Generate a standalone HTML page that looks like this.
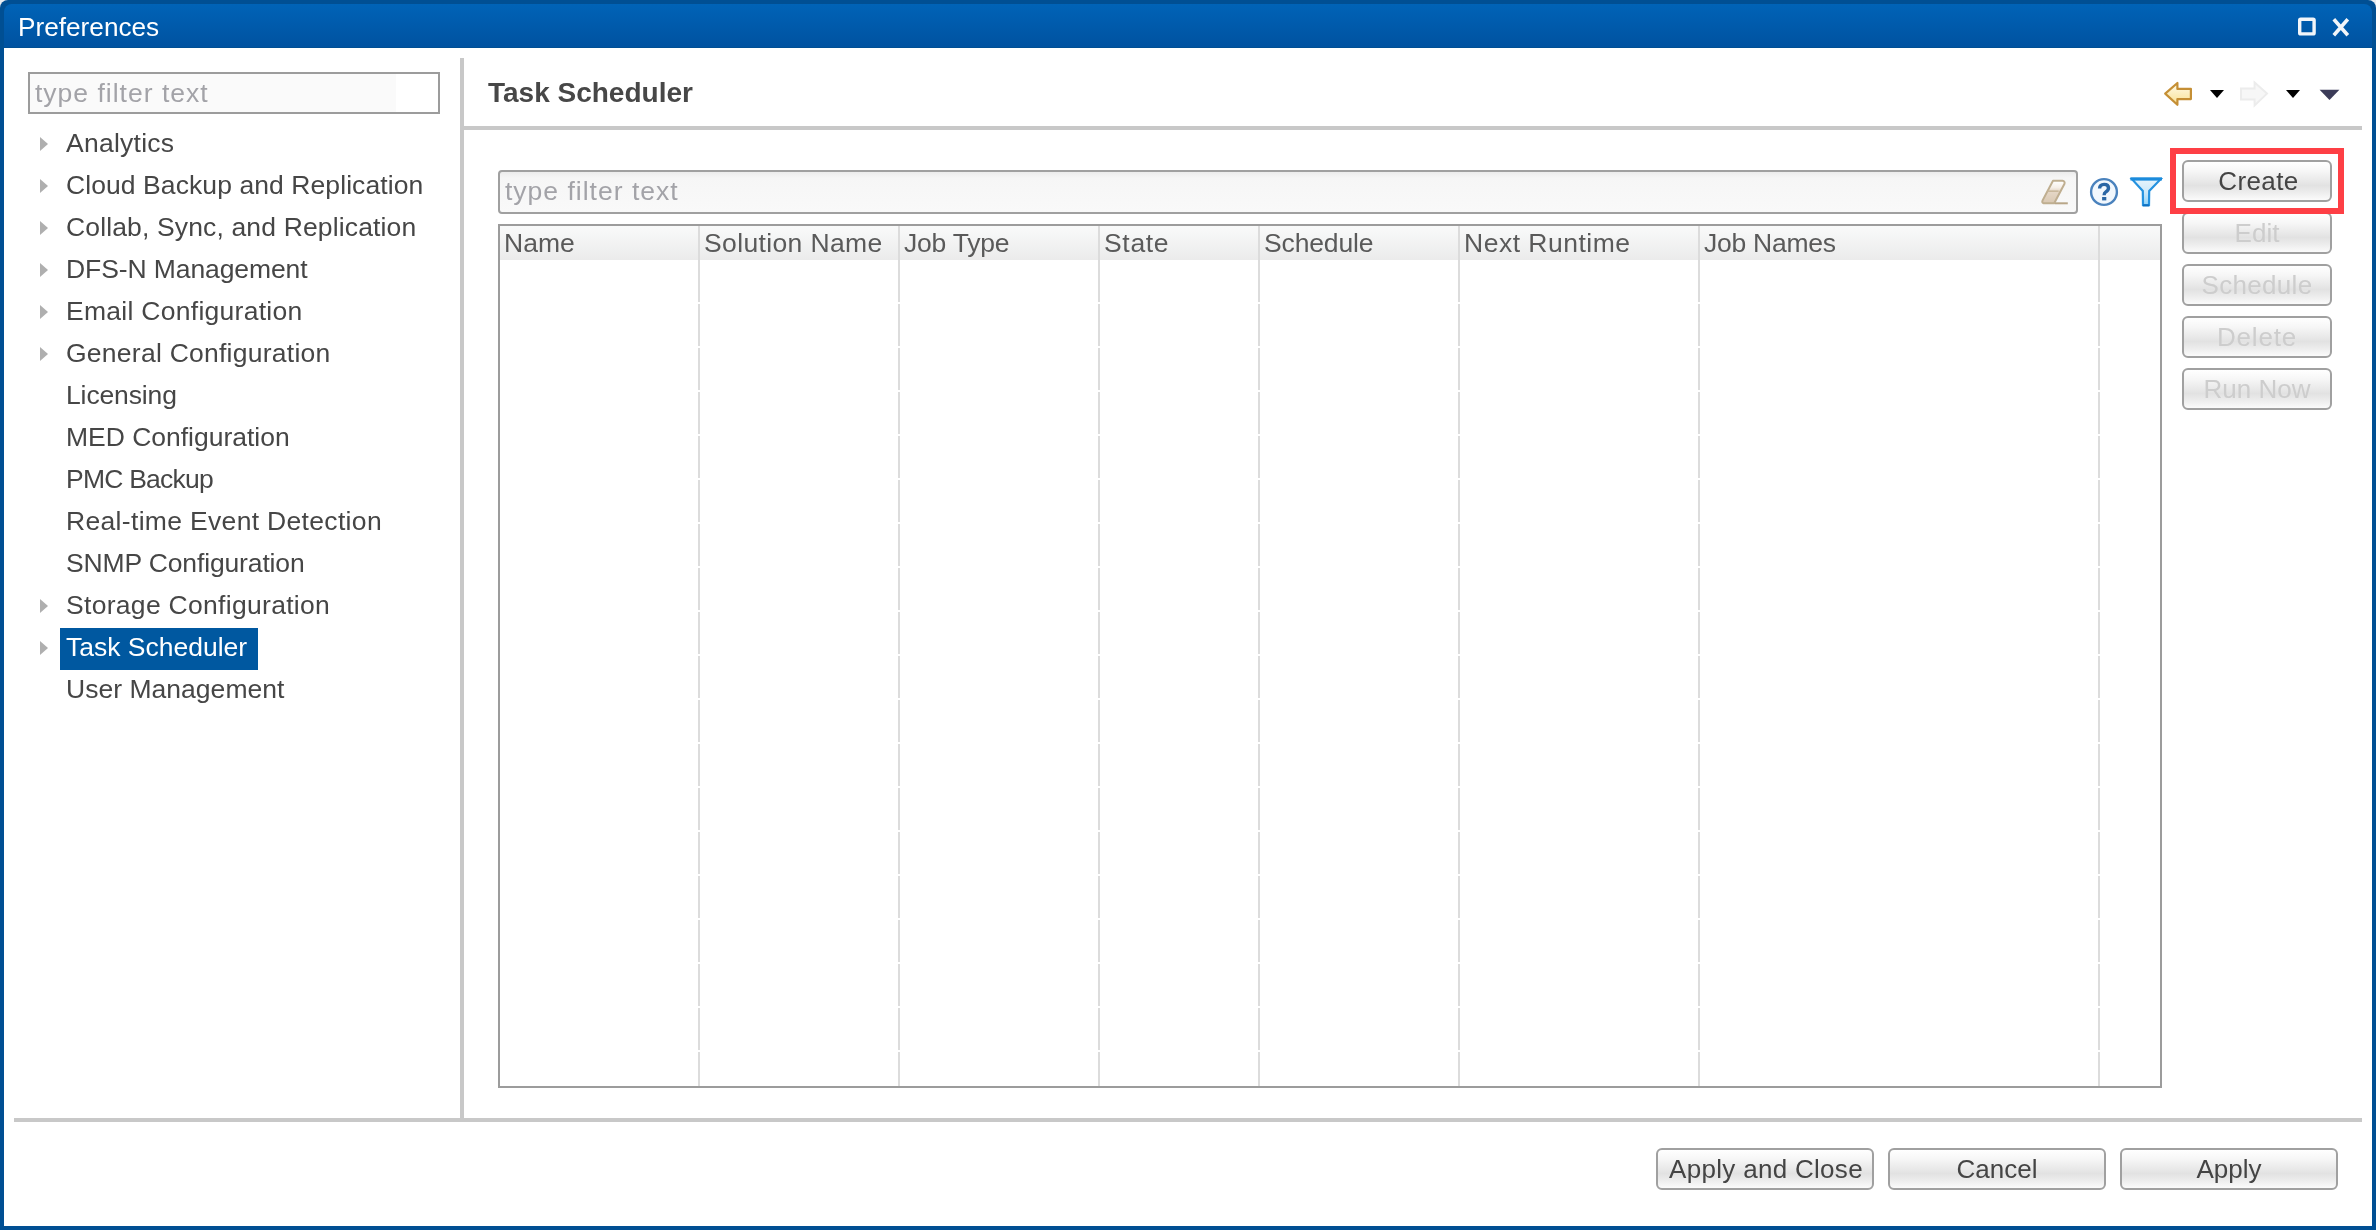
<!DOCTYPE html>
<html><head><meta charset="utf-8">
<style>
html,body{margin:0;padding:0;}
.t,.th,.btn span{will-change:transform;}
body{width:2376px;height:1230px;position:relative;overflow:hidden;background:#e9edf1;font-family:"Liberation Sans",sans-serif;}
.a{position:absolute;}
.t{position:absolute;white-space:nowrap;font-size:26.5px;line-height:30px;color:#464646;}
#frame{left:0;top:0;width:2376px;height:1230px;background:#004f93;border-radius:8px 8px 0 0;}
#titlebar{left:4px;top:4px;width:2368px;height:43px;background:linear-gradient(#0063b7,#0052a0);border-radius:8px 8px 0 0;}
#client{left:4px;top:48px;width:2368px;height:1178px;background:#ffffff;}
.tri{position:absolute;left:40px;width:0;height:0;border-top:7.5px solid transparent;border-bottom:7.5px solid transparent;border-left:8.5px solid #afafaf;}
.btn{position:absolute;box-sizing:border-box;border:2px solid #a0a0a0;border-radius:6px;background:linear-gradient(#ffffff 0%,#f6f6f6 25%,#e2e2e2 62%,#eeeeee 82%,#fbfbfb 100%);}
.btn span{position:absolute;left:0;right:0;top:4px;text-align:center;white-space:nowrap;font-size:26px;line-height:30px;color:#444;}
.btn.dis span{color:#cdcdcd;}
.colsep{position:absolute;width:2px;top:226px;height:860px;background:linear-gradient(#dcdcdc,#dcdcdc) 0 0/2px 76px no-repeat,repeating-linear-gradient(#dcdcdc 0px,#dcdcdc 42px,#ffffff 42px,#ffffff 44px) 0 78px/2px 782px no-repeat;}
.th{position:absolute;top:228px;white-space:nowrap;font-size:26.5px;line-height:30px;color:#5a5a5a;}
</style></head>
<body>
<div id="frame" class="a"></div>
<div id="titlebar" class="a"></div>
<div class="t" style="left:18px;top:12px;font-size:26.2px;color:#ffffff;">Preferences</div>
<!-- max / close -->
<svg class="a" style="left:2290px;top:10px" width="70" height="34" viewBox="0 0 70 34">
  <rect x="9.7" y="9.3" width="14.4" height="14.6" rx="1" fill="none" stroke="#f2f5f9" stroke-width="3.4"/>
  <path d="M43.8 9.3 L57.8 25.3 M57.8 9.3 L43.8 25.3" stroke="#f2f5f9" stroke-width="3.6" stroke-linecap="butt"/>
</svg>
<div id="client" class="a"></div>

<!-- left filter -->
<div class="a" style="left:28px;top:72px;width:408px;height:38px;border:2px solid #9c9c9c;background:linear-gradient(90deg,#fafafa 0,#fafafa 366px,#ffffff 366px);"></div>
<div class="t" style="left:35px;top:78px;font-size:26.5px;color:#a3a3a8;letter-spacing:1px;">type filter text</div>

<!-- tree -->
<div class="a" style="left:60px;top:628px;width:198px;height:42px;background:#0058a0;"></div>
<div class="tri" style="top:137px"></div>
<div class="tri" style="top:179px"></div>
<div class="tri" style="top:221px"></div>
<div class="tri" style="top:263px"></div>
<div class="tri" style="top:305px"></div>
<div class="tri" style="top:347px"></div>
<div class="tri" style="top:599px"></div>
<div class="tri" style="top:641px"></div>
<div class="t" style="left:66px;top:128px;letter-spacing:0.250px">Analytics</div>
<div class="t" style="left:66px;top:170px;letter-spacing:0.081px">Cloud Backup and Replication</div>
<div class="t" style="left:66px;top:212px;letter-spacing:0.143px">Collab, Sync, and Replication</div>
<div class="t" style="left:66px;top:254px;letter-spacing:-0.093px">DFS-N Management</div>
<div class="t" style="left:66px;top:296px;letter-spacing:0.278px">Email Configuration</div>
<div class="t" style="left:66px;top:338px;letter-spacing:0.250px">General Configuration</div>
<div class="t" style="left:66px;top:380px;letter-spacing:-0.125px">Licensing</div>
<div class="t" style="left:66px;top:422px;letter-spacing:-0.013px">MED Configuration</div>
<div class="t" style="left:66px;top:464px;letter-spacing:-0.778px">PMC Backup</div>
<div class="t" style="left:66px;top:506px;letter-spacing:0.325px">Real-time Event Detection</div>
<div class="t" style="left:66px;top:548px;letter-spacing:-0.141px">SNMP Configuration</div>
<div class="t" style="left:66px;top:590px;letter-spacing:0.300px">Storage Configuration</div>
<div class="t" style="left:66px;top:632px;color:#ffffff;letter-spacing:0px">Task Scheduler</div>
<div class="t" style="left:66px;top:674px;letter-spacing:0.028px">User Management</div>

<!-- dividers -->
<div class="a" style="left:460px;top:58px;width:4px;height:1064px;background:#c8c8c8;"></div>
<div class="a" style="left:14px;top:1118px;width:2348px;height:4px;background:#c8c8c8;"></div>
<div class="a" style="left:464px;top:126px;width:1898px;height:4px;background:#c8c8c8;"></div>

<!-- header -->
<div class="t" style="left:488px;top:78px;font-size:28px;font-weight:bold;color:#474747;">Task Scheduler</div>

<!-- toolbar icons -->
<svg class="a" style="left:2160px;top:78px" width="190" height="32" viewBox="0 0 190 32">
  <defs>
    <linearGradient id="gback" x1="0" y1="0" x2="0" y2="1"><stop offset="0" stop-color="#fffbea"/><stop offset="1" stop-color="#f9e092"/></linearGradient>
  </defs>
  <path d="M5.2 15.6 L17.4 5 L17.4 10.9 L30.9 10.9 L30.9 21.1 L17.4 21.1 L17.4 26.8 Z" fill="url(#gback)" stroke="#c58f35" stroke-width="2.2" stroke-linejoin="round"/>
  <path d="M50 12 L64 12 L57 20 Z" fill="#000"/>
  <path d="M107 15.6 L94.6 4.5 L94.6 10.5 L81 10.5 L81 21.5 L94.6 21.5 L94.6 27.5 Z" fill="#f7f7f7" stroke="#ececec" stroke-width="2"/>
  <path d="M126 12 L140 12 L133 20 Z" fill="#000"/>
  <path d="M159.6 11.8 L179.4 11.8 L169.5 22 Z" fill="#3b3b58"/>
</svg>

<!-- filter box -->
<div class="a" style="left:498px;top:170px;width:1576px;height:40px;border:2px solid #a0a0a0;border-radius:4px;background:linear-gradient(#ececec 0,#f6f6f6 6px,#f9f9f9 100%);"></div>
<div class="t" style="left:505px;top:176px;color:#a3a3a8;letter-spacing:1px;">type filter text</div>
<!-- eraser -->
<svg class="a" style="left:2038px;top:176px" width="34" height="32" viewBox="0 0 34 32">
  <defs><linearGradient id="ger" x1="0" y1="0" x2="0" y2="1"><stop offset="0" stop-color="#ffffff"/><stop offset="0.3" stop-color="#f6efe8"/><stop offset="0.45" stop-color="#e6d8c8"/><stop offset="1" stop-color="#d9c8b2"/></linearGradient></defs>
  <path d="M15 4.8 L24.5 4.8 Q27.2 5.2 26.5 7.8 L16.2 27.2 L5.5 27.2 Q3.6 26.8 4.6 24.4 Z" fill="url(#ger)" stroke="#bfae90" stroke-width="2" stroke-linejoin="round"/>
  <path d="M9.6 15.2 L20.6 15.2" stroke="#c9b89c" stroke-width="1.6"/>
  <path d="M17 27.3 L29.8 27.3" stroke="#b8a688" stroke-width="2"/>
</svg>
<!-- help -->
<svg class="a" style="left:2088px;top:176px" width="32" height="32" viewBox="0 0 32 32">
  <circle cx="16" cy="16" r="12.9" fill="#f1f7fd" stroke="#4a82bd" stroke-width="2.4"/>
  <path d="M11.6 12.6 Q11.6 8.4 16.1 8.4 Q20.5 8.4 20.5 12 Q20.5 14.4 17.8 15.9 Q16.1 16.9 16.1 19.2" fill="none" stroke="#2a66a5" stroke-width="3.4"/>
  <rect x="14.1" y="21" width="4.2" height="3.4" fill="#2a66a5"/>
</svg>
<!-- funnel -->
<svg class="a" style="left:2128px;top:175px" width="38" height="34" viewBox="0 0 38 34">
  <defs><linearGradient id="gfun" x1="0" y1="0" x2="0" y2="1"><stop offset="0" stop-color="#e6f4fc"/><stop offset="0.5" stop-color="#cde9fa"/><stop offset="1" stop-color="#90d2f7"/></linearGradient></defs>
  <path d="M4 4.2 L32.6 4.2 L21.2 16 L21 30.2 L15 30.2 L14.8 16 Z" fill="url(#gfun)" stroke="#2592df" stroke-width="2.2" stroke-linejoin="miter"/>
  <path d="M2.4 3.9 L34 3.9" stroke="#1b8bdc" stroke-width="3.2"/>
  <path d="M15 30.4 L21 30.4" stroke="#0f6fc0" stroke-width="2"/>
</svg>

<!-- table -->
<div class="a" style="left:498px;top:224px;width:1660px;height:860px;border:2px solid #9c9c9c;background:#ffffff;"></div>
<div class="a" style="left:500px;top:226px;width:1660px;height:34px;background:linear-gradient(#f9fafa,#ebebeb);"></div>
<div class="colsep" style="left:698px"></div>
<div class="colsep" style="left:898px"></div>
<div class="colsep" style="left:1098px"></div>
<div class="colsep" style="left:1258px"></div>
<div class="colsep" style="left:1458px"></div>
<div class="colsep" style="left:1698px"></div>
<div class="colsep" style="left:2098px"></div>
<div class="th" style="left:504px">Name</div>
<div class="th" style="left:704px;letter-spacing:0.37px">Solution Name</div>
<div class="th" style="left:904px;letter-spacing:-0.23px">Job Type</div>
<div class="th" style="left:1104px;letter-spacing:0.67px">State</div>
<div class="th" style="left:1264px;letter-spacing:-0.14px">Schedule</div>
<div class="th" style="left:1464px;letter-spacing:0.50px">Next Runtime</div>
<div class="th" style="left:1704px;letter-spacing:-0.26px">Job Names</div>

<!-- side buttons -->
<div class="btn" style="left:2182px;top:160px;width:150px;height:42px;"><span style="letter-spacing:0.4px;padding-left:3px">Create</span></div>
<div class="btn dis" style="left:2182px;top:212px;width:150px;height:42px;"><span>Edit</span></div>
<div class="btn dis" style="left:2182px;top:264px;width:150px;height:42px;"><span style="letter-spacing:0.3px">Schedule</span></div>
<div class="btn dis" style="left:2182px;top:316px;width:150px;height:42px;"><span style="letter-spacing:0.8px">Delete</span></div>
<div class="btn dis" style="left:2182px;top:368px;width:150px;height:42px;"><span>Run Now</span></div>
<div class="a" style="left:2170px;top:148px;width:162px;height:54px;border:6px solid #fe3f45;"></div>

<!-- bottom buttons -->
<div class="btn" style="left:1656px;top:1148px;width:218px;height:42px;"><span style="letter-spacing:0.3px;padding-left:2px">Apply and Close</span></div>
<div class="btn" style="left:1888px;top:1148px;width:218px;height:42px;"><span>Cancel</span></div>
<div class="btn" style="left:2120px;top:1148px;width:218px;height:42px;"><span>Apply</span></div>
</body></html>
